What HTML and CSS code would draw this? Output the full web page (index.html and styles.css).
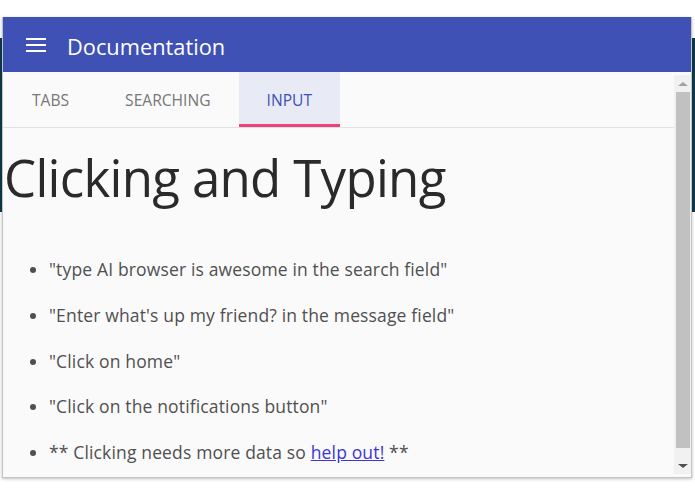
FILE: index.html
```html
<!DOCTYPE html>
<html>
<head>
<meta charset="utf-8">
<link rel="stylesheet" href="styles.css">
</head>
<body>
<div class="backdrop"></div>
<div class="popup">
  <header class="appbar">
    <svg class="menu-icon" width="20" height="14" viewBox="0 0 20 14">
      <rect x="0" y="0" width="20" height="2" fill="#fff"/>
      <rect x="0" y="6" width="20" height="2" fill="#fff"/>
      <rect x="0" y="12" width="20" height="2" fill="#fff"/>
    </svg>
    <span class="title">Documentation</span>
  </header>
  <div class="body">
    <div class="main">
      <nav class="tabs">
        <div class="tab">Tabs</div>
        <div class="tab">Searching</div>
        <div class="tab active">Input</div>
      </nav>
      <h1 class="heading">Clicking and Typing</h1>
      <ul class="examples">
        <li>"type AI browser is awesome in the search field"</li>
        <li>"Enter what's up my friend? in the message field"</li>
        <li>"Click on home"</li>
        <li>"Click on the notifications button"</li>
        <li>** Clicking needs more data so <a href="#">help out!</a> **</li>
      </ul>
    </div>
    <div class="scrollbar">
      <div class="btn"><div class="arrow up"></div></div>
      <div class="thumb"></div>
      <div class="spacer"></div>
      <div class="btn"><div class="arrow down"></div></div>
    </div>
  </div>
</div>
</body>
</html>
```

FILE: styles.css
```css
html, body {
  margin: 0;
  padding: 0;
  background: #ffffff;
  width: 695px;
  height: 494px;
  overflow: hidden;
  font-family: "Open Sans", "Noto Sans", sans-serif;
}

.backdrop {
  position: absolute;
  left: 0;
  top: 38px;
  width: 695px;
  height: 174px;
  background: #0e3a4b;
}

.popup {
  position: absolute;
  left: 2px;
  top: 17px;
  width: 688px;
  height: 460px;
  background: #fafafa;
  border: 1px solid #c4c4c4;
  border-top: none;
  box-shadow: 0 1px 3px rgba(0,0,0,0.25);
  display: flex;
  flex-direction: column;
}

.appbar {
  height: 55px;
  background: #3f51b5;
  display: flex;
  align-items: center;
  padding-left: 23px;
  flex: none;
}

.menu-icon {
  display: block;
}

.title {
  color: #ffffff;
  font-size: 21.8px;
  margin-left: 21px;
  margin-top: 4px;
}

.body {
  flex: 1;
  display: flex;
  min-height: 0;
}

.main {
  flex: 1;
  min-width: 0;
}

.tabs {
  display: flex;
  height: 55px;
  border-bottom: 1px solid #e2e2e2;
  padding-left: 1px;
}

.tab {
  padding: 1px 28px 0 28px;
  display: flex;
  align-items: center;
  text-transform: uppercase;
  font-size: 15.6px;
  color: #777777;
  box-sizing: border-box;
  height: 55px;
}

.tab.active {
  background: #e8eaf6;
  color: #3f51b5;
  border-bottom: 3px solid #f0417b;
  padding-top: 4px;
}

.heading {
  margin: 19px 0 0 1px;
  font-size: 51px;
  font-weight: 400;
  line-height: 60px;
  color: #2a2a2a;
  letter-spacing: -0.7px;
}

.examples {
  margin: 51px 0 0 0;
  padding-left: 46px;
  color: #505050;
  font-size: 17.5px;
  line-height: 22px;
  letter-spacing: 0.15px;
}

.examples li {
  margin-bottom: 23.75px;
}

.examples a {
  color: #3c35d6;
}

.scrollbar {
  width: 17px;
  margin: 3px 0 3px 0;
  background: #f1f1f1;
  display: flex;
  flex-direction: column;
  align-items: center;
}

.btn {
  height: 17px;
  width: 17px;
  display: flex;
  align-items: center;
  justify-content: center;
  flex: none;
}

.thumb {
  width: 14px;
  height: 356px;
  background: #c1c1c1;
  flex: none;
}

.spacer {
  flex: 1;
}

.arrow {
  width: 0;
  height: 0;
  border-left: 5px solid transparent;
  border-right: 5px solid transparent;
}

.arrow.up {
  border-bottom: 4px solid #a3a3a3;
}

.arrow.down {
  border-top: 4px solid #505050;
}
```
